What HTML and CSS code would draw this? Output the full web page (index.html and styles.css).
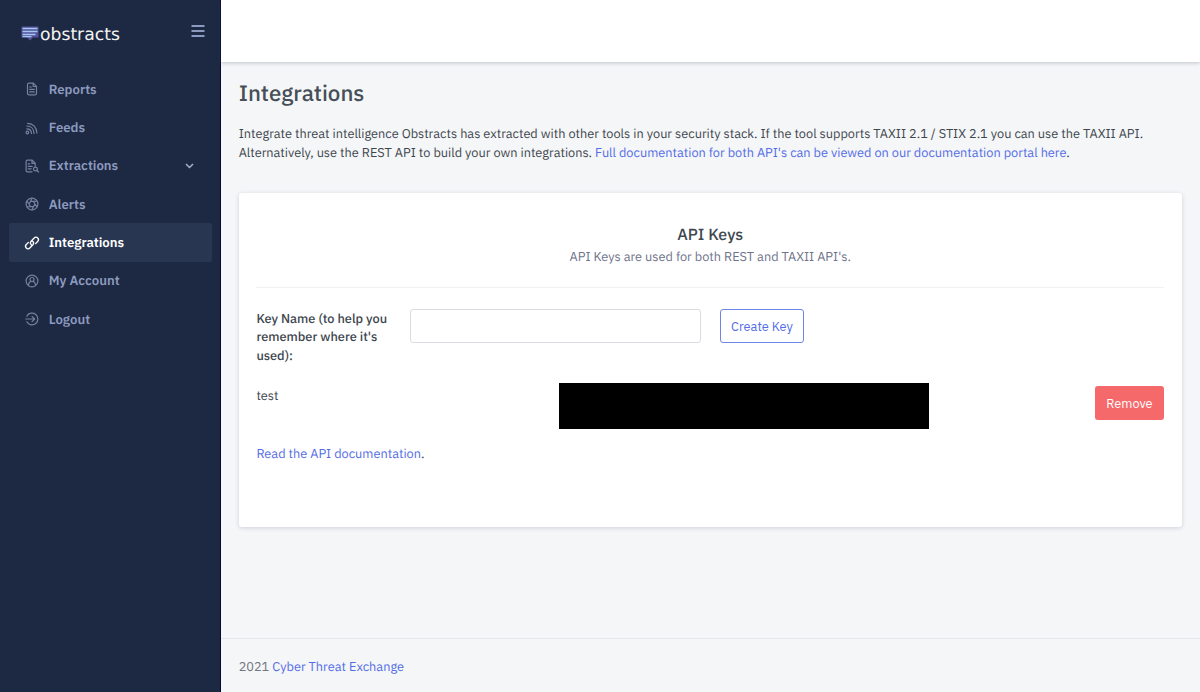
FILE: index.html
```html
<!DOCTYPE html>
<html lang="en">
<head>
<meta charset="utf-8">
<title>Integrations</title>
<link rel="stylesheet" href="styles.css">
</head>
<body>
<div class="app">
  <aside class="sidebar">
    <div class="brand">
      <a class="logo" href="#">
        <svg class="logo-mark" width="18" height="15" viewBox="0 0 18 15"><path fill="#54509c" d="M.5.5h17v11h-5.500L9 14.500 6 11.500H.5z"/><path stroke="#a5c9ee" stroke-width="1.300" d="M1.500 2.500h15M1.500 5.500h15M1.500 8.500h13M1.500 10.700h9"/></svg>
        <span class="logo-text">obstracts</span>
      </a>
      <svg class="menu-icon" width="14" height="12" viewBox="0 0 14 12"><path stroke="#8c9abf" stroke-width="2" d="M.5 1h13M.5 6h13M.5 11h13"/></svg>
    </div>
    <nav class="nav">
      <a class="item" href="#"><svg class="icon" viewBox="0 0 14 14"><path d="M4 1.200h4.300l3.200 3.200v6.900a1.500 1.500 0 0 1-1.500 1.500H4a1.500 1.500 0 0 1-1.500-1.500V2.700A1.500 1.500 0 0 1 4 1.200zM8.200 1.500v3h3M4.700 5h1.600M4.700 7.400h4.600M4.700 9.900h4.600"/></svg><span>Reports</span></a>
      <a class="item" href="#"><svg class="icon" viewBox="0 0 14 14"><circle cx="2.400" cy="11.500" r="1.300"/><path d="M1.800 7.800c2.900 0 4.600 1.800 4.700 4.600M1.800 5c4.300 0 7.200 3 7.300 7.400M2.600 2.300c5.500.1 9.200 4.100 9.300 9.600"/></svg><span>Feeds</span></a>
      <a class="item" href="#"><svg class="icon" viewBox="0 0 14 14"><path d="M7 12.800H2.400a1.300 1.300 0 0 1-1.300-1.300v-9a1.300 1.300 0 0 1 1.300-1.300h4.800l3 3v3M7 1.400v3h3M3.200 4.800h1.500M3.200 7.300h4M3.200 9.800h3M12 11.500l1.500 1.500"/><circle cx="10.400" cy="10" r="1.900"/></svg><span>Extractions</span><svg class="chevron" width="9" height="6" viewBox="0 0 9 6"><path d="M1 1l3.500 3.500L8 1"/></svg></a>
      <a class="item" href="#"><svg class="icon" viewBox="0 0 14 14"><circle cx="7" cy="7" r="5.900"/><path d="M5.500 4.400h3L10 7 8.500 9.600h-3L4 7zM5.500 4.400L7 1.200M8.500 4.400l3.500-.3M10 7l2.100 2.900M8.500 9.600L7 12.800M5.500 9.600L2 9.900M4 7L1.900 4.100"/></svg><span>Alerts</span></a>
      <a class="item active" href="#"><svg class="icon" viewBox="0 0 14 14"><path d="M6.300 8.700a2.500 2.500 0 0 1-.2-3.500l3.100-3.200a2.350 2.350 0 0 1 3.500 0 2.500 2.500 0 0 1 0 3.500L10.600 7.600M7.700 5.300a2.500 2.500 0 0 1 .2 3.500L4.800 12a2.350 2.350 0 0 1-3.500 0 2.500 2.500 0 0 1 0-3.500l2.100-2.100"/></svg><span>Integrations</span></a>
      <a class="item" href="#"><svg class="icon" viewBox="0 0 14 14"><circle cx="7" cy="7" r="5.900"/><circle cx="7" cy="5.500" r="2"/><path d="M3.600 11v-.7C3.700 8.500 5 7.500 7 7.500s3.300 1 3.400 2.800v.7"/></svg><span>My Account</span></a>
      <a class="item" href="#"><svg class="icon" viewBox="0 0 14 14"><path d="M1.800 4.200a5.900 5.900 0 1 1 0 5.600M.8 7h8.600M7 4.300L9.700 7 7 9.700"/></svg><span>Logout</span></a>
    </nav>
  </aside>
  <div class="page">
    <header class="topbar"></header>
    <main class="content">
      <h1 class="title">Integrations</h1>
      <p class="intro">Integrate threat intelligence Obstracts has extracted with other tools in your security stack. If the tool supports TAXII 2.1 / STIX 2.1 you can use the TAXII API.<br>Alternatively, use the REST API to build your own integrations. <a href="#">Full documentation for both API's can be viewed on our documentation portal here</a>.</p>
      <section class="card">
        <div class="card-head">
          <h2 class="card-title">API Keys</h2>
          <p class="card-sub">API Keys are used for both REST and TAXII API's.</p>
        </div>
        <form class="key-form">
          <label class="label" for="key">Key Name (to help you<br>remember where it's<br>used):</label>
          <input class="input" id="key" type="text">
          <button class="btn btn-outline" type="button">Create Key</button>
        </form>
        <div class="key-row">
          <span class="key-name">test</span>
          <span class="key-value"></span>
          <button class="btn btn-danger" type="button">Remove</button>
        </div>
        <p class="docs"><a href="#">Read the API documentation</a>.</p>
      </section>
    </main>
    <footer class="footer"><span class="year">2021</span><a class="owner" href="#">Cyber Threat Exchange</a></footer>
  </div>
</div>
</body>
</html>
```
FILE: styles.css
```css
* { box-sizing: border-box; }
body { margin: 0; font: 12.740px/19px "IBM Plex Sans", Roboto, sans-serif; color: #3e464e; background: #f5f6f8; text-rendering: geometricPrecision; }
h1, h2, p { margin: 0; }
a { color: #536de6; text-decoration: none; }
.app { display: flex; height: 692px; overflow: hidden; }

.sidebar { width: 221px; flex: none; background: #1d2842; border-right: 1px solid #06073a; }
.brand { height: 62px; display: flex; justify-content: space-between; align-items: flex-start; padding: 25px 15px 0 21px; }
.logo { display: flex; align-items: flex-start; color: #f4f4f2; }
.logo-mark { margin: 1px 1px 0 0; }
.logo-text { padding-top: 1px; font: 17.200px/18px "DejaVu Sans", sans-serif; }
.nav { display: flex; flex-direction: column; padding: 8px 8px 0 9px; }
.item { display: flex; align-items: center; height: 38.350px; padding: 0 18px 0 16px; border-radius: 2px; color: #8c9abf; font-size: 13.200px; font-weight: 600; white-space: nowrap; }
.icon { width: 14px; height: 14px; margin-right: 9.700px; overflow: visible; fill: none; stroke: #75819f; stroke-width: 1.200; stroke-linecap: round; stroke-linejoin: round; }
.active { background: #293652; color: #fff; }
.active .icon { stroke: #fff; stroke-width: 1.300; }
.chevron { margin-left: auto; fill: none; stroke: #a5b1cf; stroke-width: 1.500; }

.page { flex: 1; display: flex; flex-direction: column; min-width: 0; }
.topbar { height: 62px; flex: none; background: #fff; box-shadow: 0 1px 4px rgba(70, 80, 110, .3); }
.content { flex: 1; padding: 19px 18px 0 17.700px; }
.title { font-size: 22.300px; line-height: 26px; font-weight: 500; color: #464f57; }
.intro { margin-top: 17px; white-space: nowrap; }
.card { margin-top: 31px; height: 333.600px; padding: 31px 18px 0 17.700px; background: #fff; border-radius: 3px; box-shadow: 0 1px 4px rgba(70, 80, 110, .22); }
.card-head { height: 64px; border-bottom: 1px solid #f0f1f3; text-align: center; }
.card-title { font-size: 16px; line-height: 22px; font-weight: 500; color: #40484f; }
.card-sub { line-height: 21px; color: #6e738b; }
.key-form { display: flex; align-items: flex-start; margin-top: 21px; height: 74px; }
.label { width: 153.600px; padding-top: .5px; line-height: 18.700px; font-weight: 500; white-space: nowrap; }
.input { width: 291px; height: 34px; margin-right: 19px; border: 1px solid #d9dce1; border-radius: 3px; background: #fff; }
.btn { height: 34px; padding: 0; border-radius: 3px; font: 12.740px/19px "IBM Plex Sans", Roboto, sans-serif; }
.btn-outline { width: 84px; border: 1px solid #7184ea; background: #fff; color: #536de6; }
.btn-danger { width: 69px; margin-left: auto; margin-top: 3px; border: 0; background: #f5696b; color: #fff; }
.key-row { display: flex; align-items: flex-start; height: 46px; }
.key-name { width: 302.600px; padding-top: 3px; }
.key-value { width: 370px; height: 46px; background: #000; }
.docs { margin-top: 15px; }
.footer { height: 54.500px; flex: none; display: flex; gap: 3px; align-items: center; padding: 2px 18px 0 17.700px; border-top: 1px solid #e5e7eb; color: #717580; }
```
